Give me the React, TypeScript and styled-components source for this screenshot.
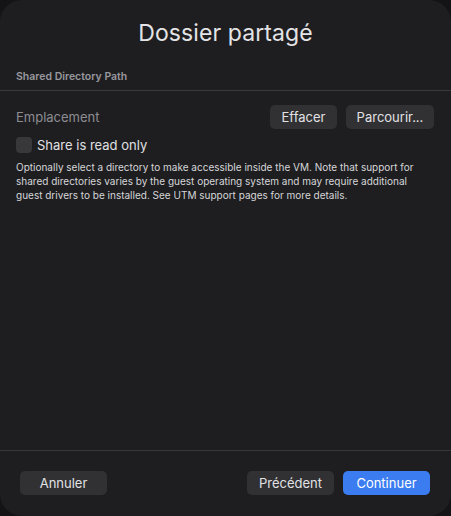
import React from "react";
import styled, { createGlobalStyle } from "styled-components";

const Global = createGlobalStyle`
  html, body { margin: 0; padding: 0; background: #141416; }
  body { font-family: Inter, "Noto Sans", sans-serif; -webkit-font-smoothing: antialiased; }
`;

const Dialog = styled.div`
  width: 451px;
  height: 516px;
  box-sizing: border-box;
  background: #1e1e21;
  border-radius: 22px;
  display: flex;
  flex-direction: column;
  overflow: hidden;
`;

const Title = styled.h1`
  margin: 0;
  padding-top: 19px;
  height: 33px;
  text-align: center;
  font-size: 23px;
  font-weight: 400;
  color: #e4e4e6;
  letter-spacing: 0.1px;
`;

const SectionHeader = styled.div`
  margin-top: 18px;
  padding: 0 16px 7px;
  font-size: 10.5px;
  font-weight: 600;
  color: #98989d;
  border-bottom: 1px solid #3a3a3d;
`;

const Content = styled.div`
  flex: 1;
  padding: 14px 16px 0;
  display: flex;
  flex-direction: column;
`;

const Row = styled.div`
  display: flex;
  align-items: center;
  height: 24px;
  padding-right: 1px;
`;

const RowLabel = styled.div`
  flex: 1;
  font-size: 13px;
  color: #8d8d92;
`;

const Buttons = styled.div`
  display: flex;
  gap: 9px;
`;

const Button = styled.button<{ $primary?: boolean; $w: number }>`
  width: ${(p) => p.$w}px;
  height: 24px;
  border: none;
  border-radius: 5px;
  background: ${(p) => (p.$primary ? "#3b7cf1" : "#313134")};
  color: ${(p) => (p.$primary ? "#ffffff" : "#e2e2e4")};
  font-family: inherit;
  font-size: 13px;
  padding: 0;
  display: flex;
  align-items: center;
  justify-content: center;
`;

const CheckRow = styled.label`
  display: flex;
  align-items: center;
  gap: 5px;
  margin-top: 8px;
  font-size: 13px;
  color: #e0e0e2;
`;

const Box = styled.span`
  width: 16px;
  height: 16px;
  border-radius: 4px;
  background: #38383b;
  display: inline-block;
`;

const Help = styled.p`
  margin: 8px 0 0;
  font-size: 10px;
  line-height: 13.8px;
  color: #d6d6d8;
`;

const Footer = styled.div`
  border-top: 1px solid #38383b;
  height: 66px;
  box-sizing: border-box;
  padding: 20px 21px 0 20px;
  display: flex;
  align-items: flex-start;
`;

const Spacer = styled.div`
  flex: 1;
`;

export default function App() {
  return (
    <>
      <Global />
      <Dialog>
        <Title>Dossier partagé</Title>
        <SectionHeader>Shared Directory Path</SectionHeader>
        <Content>
          <Row>
            <RowLabel>Emplacement</RowLabel>
            <Buttons>
              <Button $w={67}>Effacer</Button>
              <Button $w={88}>Parcourir...</Button>
            </Buttons>
          </Row>
          <CheckRow>
            <Box />
            Share is read only
          </CheckRow>
          <Help>
            Optionally select a directory to make accessible inside the VM. Note that support for shared
            directories varies by the guest operating system and may require additional guest drivers to
            be installed. See UTM support pages for more details.
          </Help>
        </Content>
        <Footer>
          <Button $w={87}>Annuler</Button>
          <Spacer />
          <Buttons>
            <Button $w={87}>Précédent</Button>
            <Button $w={87} $primary>
              Continuer
            </Button>
          </Buttons>
        </Footer>
      </Dialog>
    </>
  );
}
